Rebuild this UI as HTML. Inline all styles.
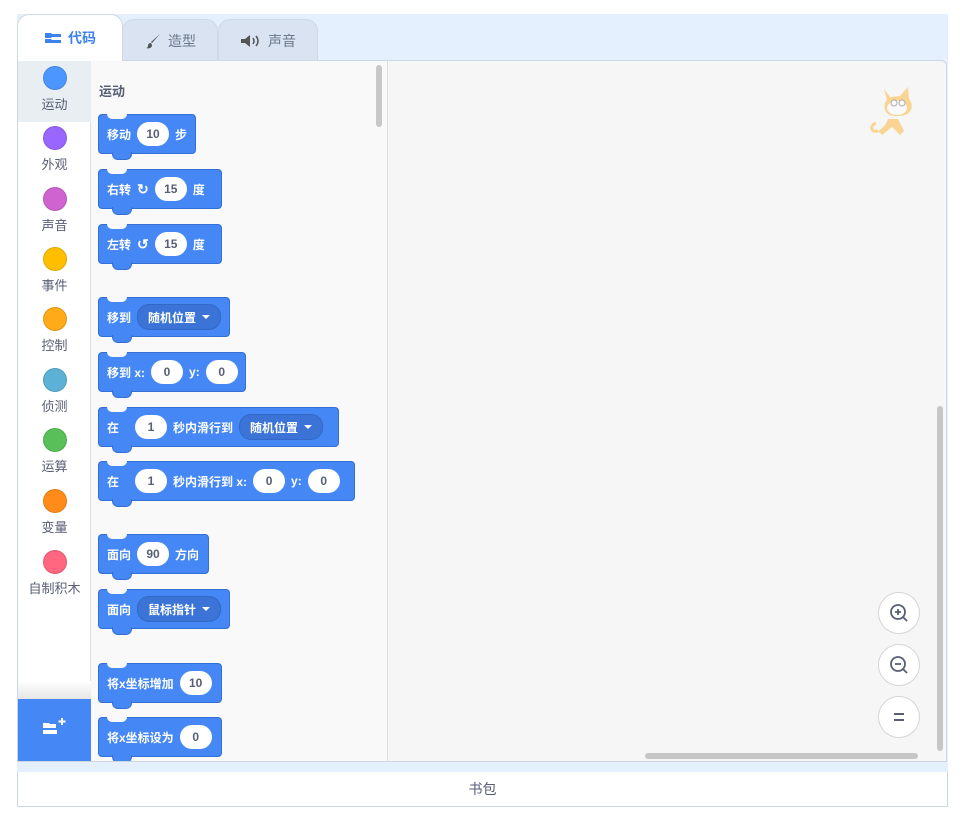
<!DOCTYPE html>
<html><head><meta charset="utf-8"><style>
*{box-sizing:border-box;margin:0;padding:0}
body{width:961px;height:826px;background:#fff;font-family:"Liberation Sans","Noto Sans CJK SC",sans-serif;position:relative;overflow:hidden}
.abs{position:absolute}
.bgblue{left:17px;top:14px;width:931px;height:758px;background:#e5f0ff}
.tab{position:absolute;top:19px;height:42px;border:1px solid #cfd8e6;border-bottom:none;border-radius:12px 12px 0 0;background:#d9e3f2;color:#6b778a;font-size:14px;display:flex;align-items:center;justify-content:center;gap:6px}
.tab.act{background:#fff;color:#3d82f0;font-weight:bold;z-index:3;top:14px;height:47px}
.panel{left:17px;top:60px;width:930px;height:702px;border:1px solid #cdd6e3;background:#fff;border-radius:0 6px 0 0;overflow:hidden}
.cats{left:0;top:0;width:73px;height:700px;background:#fff;border-right:1px solid #e0e0e0}
.cat{position:absolute;left:0;width:73px;text-align:center;font-size:13px;color:#575e75}
.cat i{display:block;width:24px;height:24px;border-radius:50%;margin:0 auto 4px;border:1px solid rgba(0,0,0,.12)}
.pal{left:73px;top:0;width:297px;height:700px;background:#f9f9f9;border-right:1px solid #ddd}
.code{left:370px;top:0;width:558px;height:700px;background:#f6f6f6}
.blk{position:absolute;left:80px;height:40px;background:#4587f5;border:1px solid #346fd6;border-radius:4px;color:#fff;font-size:12px;font-weight:bold;display:flex;align-items:center;padding-left:8px;gap:6px;white-space:nowrap}
.blk:before{content:"";position:absolute;left:8px;top:-1px;width:20px;height:5px;background:#f9f9f9;border-radius:0 0 6px 6px}
.blk:after{content:"";position:absolute;left:13px;bottom:-7px;width:18px;height:7px;background:#4587f5;border:1px solid #346fd6;border-top:none;border-radius:0 0 6px 6px}
.in{background:#fff;color:#575e75;border-radius:12px;height:24px;min-width:32px;padding:0 9px;display:inline-flex;align-items:center;justify-content:center;font-size:12px}
.dd{background:#3b74d6;border:1px solid #3069c8;border-radius:12px;height:26px;padding:0 10px;display:inline-flex;align-items:center;gap:6px}
.dd b{width:0;height:0;border-left:4px solid transparent;border-right:4px solid transparent;border-top:4px solid #fff}
.zb{position:absolute;left:490px;width:42px;height:42px;border-radius:50%;background:#fff;border:1px solid #d5d5d5}
</style></head><body>
<div class="abs bgblue"></div>
<div class="tab act" style="left:17px;width:106px"><svg width="18" height="12" viewBox="0 0 18 12"><path d="M1 1h6l1 1h9v3H8l-1 1H1z M1 7h6l1 1h9v3H1z" fill="#3d82f0"/></svg>代码</div>
<div class="tab" style="left:122px;width:96px"><svg width="18" height="18" viewBox="0 0 18 18"><path d="M16 2 8 11l-1-1z M7 11c-2 0-3 1-3 3 0 1-1 2-2 2 3 1 6 0 6-3z" fill="#555"/></svg>造型</div>
<div class="tab" style="left:218px;width:100px"><svg width="22" height="14" viewBox="0 0 22 14"><path d="M1 5h4l5-4v12L5 9H1z" fill="#555"/><path d="M13 4q2 3 0 6M16 2q4 5 0 10" stroke="#555" stroke-width="1.5" fill="none"/></svg>声音</div>
<div class="abs panel">
 <div class="abs cats">
  <div class="abs" style="left:0;top:0;width:73px;height:61px;background:#e9eef2"></div>
  <div class="cat" style="top:5px"><i style="background:#4c97ff"></i>运动</div>
  <div class="cat" style="top:65px"><i style="background:#9966ff"></i>外观</div>
  <div class="cat" style="top:126px"><i style="background:#cf63cf"></i>声音</div>
  <div class="cat" style="top:186px"><i style="background:#ffbf00"></i>事件</div>
  <div class="cat" style="top:246px"><i style="background:#ffab19"></i>控制</div>
  <div class="cat" style="top:307px"><i style="background:#5cb1d6"></i>侦测</div>
  <div class="cat" style="top:367px"><i style="background:#59c059"></i>运算</div>
  <div class="cat" style="top:428px"><i style="background:#ff8c1a"></i>变量</div>
  <div class="cat" style="top:489px"><i style="background:#ff6680"></i>自制积木</div>
  <div class="abs" style="left:0;top:620px;width:73px;height:18px;background:linear-gradient(#fff,#e6e6e6)"></div>
  <div class="abs" style="left:0;top:638px;width:73px;height:62px;background:#4587f5"><svg style="position:absolute;left:24px;top:18px" width="26" height="22" viewBox="0 0 26 22"><path d="M1 6h6l1 1h6v4H1z M1 13h14v4H1z" fill="#fff"/><path d="M20 1v7M16.5 4.5h7" stroke="#fff" stroke-width="2"/></svg></div>
 </div>
 <div class="abs pal">
  <div class="abs" style="left:8px;top:20px;font-size:13px;font-weight:bold;color:#575e75">运动</div>
  <div class="abs" style="left:285px;top:4px;width:6px;height:62px;border-radius:3px;background:#c8c8c8"></div>
 </div>
 <div class="abs code">
  <svg class="abs" style="left:480px;top:22px" width="56" height="60" viewBox="0 0 56 60"><g opacity=".45"><path d="M16 6l6 8 10-1 8-9 1 12c4 4 4 12-2 15-6 3-16 3-20-1-4-4-3-10 0-13z" fill="#ffab19"/><ellipse cx="29" cy="25" rx="10" ry="7" fill="#fff"/><circle cx="26" cy="20" r="3" fill="#fff" stroke="#555"/><circle cx="34" cy="20" r="3" fill="#fff" stroke="#555"/><path d="M20 36c-2 6-6 10-10 12l4 4 10-8 8 8 4-4-6-12z" fill="#ffab19"/><path d="M8 40c-6 2-6 10 2 8" stroke="#ffab19" stroke-width="3" fill="none"/></g></svg>
  <div class="zb" style="top:531px"><svg width="40" height="40" viewBox="0 0 40 40"><circle cx="19" cy="19" r="7" stroke="#575e75" stroke-width="1.8" fill="none"/><path d="M24 24l4 4M19 16v6M16 19h6" stroke="#575e75" stroke-width="1.8"/></svg></div>
  <div class="zb" style="top:583px"><svg width="40" height="40" viewBox="0 0 40 40"><circle cx="19" cy="19" r="7" stroke="#575e75" stroke-width="1.8" fill="none"/><path d="M24 24l4 4M16 19h6" stroke="#575e75" stroke-width="1.8"/></svg></div>
  <div class="zb" style="top:635px"><svg width="40" height="40" viewBox="0 0 40 40"><path d="M15 17h10M15 23h10" stroke="#575e75" stroke-width="2"/></svg></div>
  <div class="abs" style="left:549px;top:345px;width:6px;height:345px;border-radius:3px;background:#c6c6c6"></div>
  <div class="abs" style="left:257px;top:692px;width:273px;height:6px;border-radius:3px;background:#c6c6c6"></div>
 </div>
 <div class="blk" style="top:53px;width:98px">移动 <span class="in">10</span> 步</div>
 <div class="blk" style="top:108px;width:124px">右转 <span style="font-size:14px">↻</span> <span class="in">15</span> 度</div>
 <div class="blk" style="top:163px;width:124px">左转 <span style="font-size:14px">↺</span> <span class="in">15</span> 度</div>
 <div class="blk" style="top:236px;width:132px">移到 <span class="dd">随机位置 <b></b></span></div>
 <div class="blk" style="top:291px;width:148px">移到 x: <span class="in">0</span> y: <span class="in">0</span></div>
 <div class="blk" style="top:346px;width:241px">在 &nbsp;&nbsp;<span class="in">1</span> 秒内滑行到 <span class="dd">随机位置 <b></b></span></div>
 <div class="blk" style="top:400px;width:257px">在 &nbsp;&nbsp;<span class="in">1</span> 秒内滑行到 x: <span class="in">0</span> y: <span class="in">0</span></div>
 <div class="blk" style="top:473px;width:111px">面向 <span class="in">90</span> 方向</div>
 <div class="blk" style="top:528px;width:132px">面向 <span class="dd">鼠标指针 <b></b></span></div>
 <div class="blk" style="top:602px;width:124px">将x坐标增加 <span class="in">10</span></div>
 <div class="blk" style="top:656px;width:124px">将x坐标设为 <span class="in">0</span></div>
</div>
<div class="abs" style="left:17px;top:772px;width:931px;height:35px;border:1px solid #cdd6e3;border-top:none;background:#fff;font-size:14px;color:#575e75;text-align:center;line-height:34px">书包</div>
</body></html>
